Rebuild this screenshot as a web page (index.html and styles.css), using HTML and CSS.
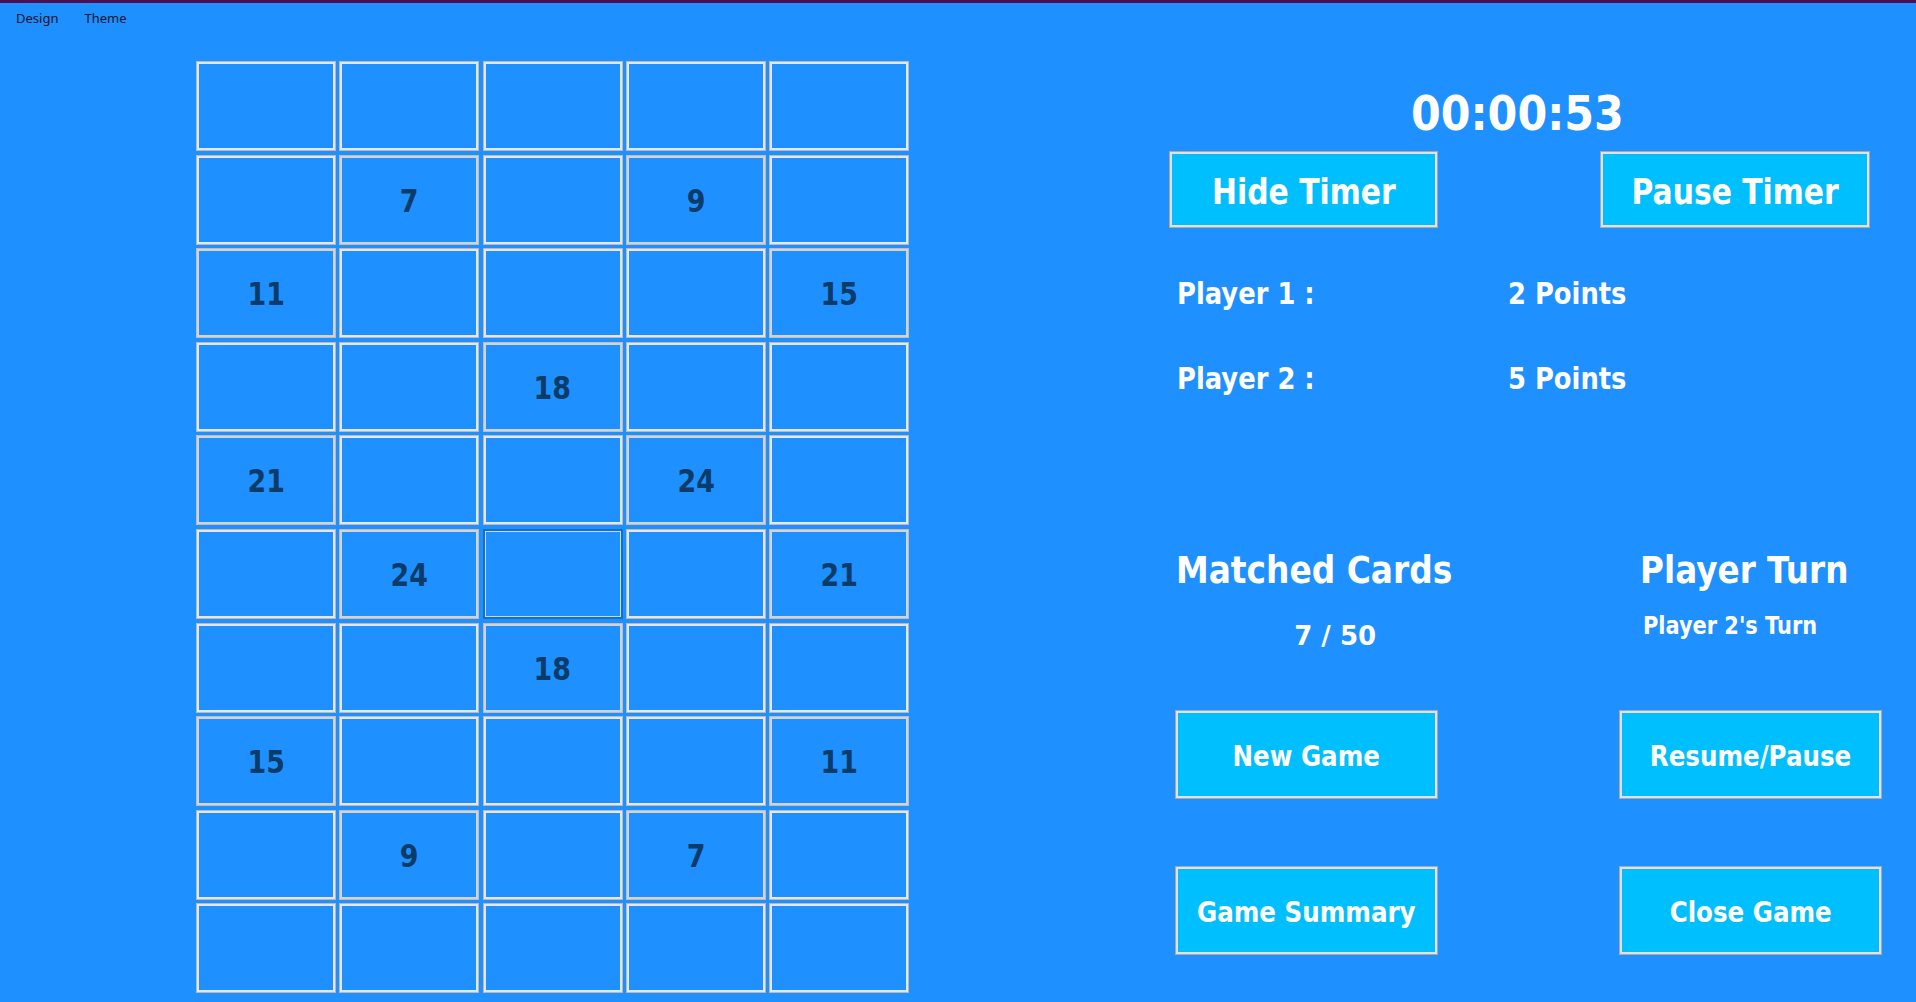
FILE: index.html
```html
<!DOCTYPE html>
<html lang="en">
<head>
<meta charset="utf-8">
<title>Memory Game</title>
<link rel="stylesheet" href="styles.css">
</head>
<body>
<div class="window">
  <nav class="menubar">
    <span class="menu-item">Design</span>
    <span class="menu-item">Theme</span>
  </nav>
  <main class="main">
    <section class="board">
      <div class="cell"></div><div class="cell"></div><div class="cell"></div><div class="cell"></div><div class="cell"></div>
      <div class="cell"></div><div class="cell open"><span>7</span></div><div class="cell"></div><div class="cell open"><span>9</span></div><div class="cell"></div>
      <div class="cell open"><span>11</span></div><div class="cell"></div><div class="cell"></div><div class="cell"></div><div class="cell open"><span>15</span></div>
      <div class="cell"></div><div class="cell"></div><div class="cell open"><span>18</span></div><div class="cell"></div><div class="cell"></div>
      <div class="cell open"><span>21</span></div><div class="cell"></div><div class="cell"></div><div class="cell open"><span>24</span></div><div class="cell"></div>
      <div class="cell"></div><div class="cell open"><span>24</span></div><div class="cell focus"></div><div class="cell"></div><div class="cell open"><span>21</span></div>
      <div class="cell"></div><div class="cell"></div><div class="cell open"><span>18</span></div><div class="cell"></div><div class="cell"></div>
      <div class="cell open"><span>15</span></div><div class="cell"></div><div class="cell"></div><div class="cell"></div><div class="cell open"><span>11</span></div>
      <div class="cell"></div><div class="cell open"><span>9</span></div><div class="cell"></div><div class="cell open"><span>7</span></div><div class="cell"></div>
      <div class="cell"></div><div class="cell"></div><div class="cell"></div><div class="cell"></div><div class="cell"></div>
    </section>
    <aside class="side">
      <div class="timer"><span>00:00:53</span></div>
      <div class="timer-actions">
        <button class="btn btn-timer"><span>Hide Timer</span></button>
        <button class="btn btn-timer btn-timer-r"><span>Pause Timer</span></button>
      </div>
      <div class="scores">
        <div class="score"><span class="score-name"><span>Player 1 :</span></span><span class="score-pts"><span>2 Points</span></span></div>
        <div class="score"><span class="score-name"><span>Player 2 :</span></span><span class="score-pts"><span>5 Points</span></span></div>
      </div>
      <div class="heads">
        <div class="head-left"><span>Matched Cards</span></div>
        <div class="head-right"><span>Player Turn</span></div>
      </div>
      <div class="sub">
        <div class="sub-left"><span>7 / 50</span></div>
        <div class="sub-right"><span>Player 2's Turn</span></div>
      </div>
      <div class="actions">
        <button class="btn btn-action"><span>New Game</span></button>
        <button class="btn btn-action"><span>Resume/Pause</span></button>
        <button class="btn btn-action"><span>Game Summary</span></button>
        <button class="btn btn-action"><span>Close Game</span></button>
      </div>
    </aside>
  </main>
</div>
</body>
</html>
```

FILE: styles.css
```css
html, body {
  margin: 0;
  padding: 0;
}
body {
  background: #1e90ff;
  font-family: "DejaVu Sans", Verdana, sans-serif;
  height: 1002px;
  overflow: hidden;
}
.window {
  border-top: 3px solid #4b0f52;
}
.menubar {
  height: 24px;
  box-sizing: border-box;
  padding: 7px 0 0 16px;
  display: flex;
  gap: 26px;
  font-family: "Noto Sans", "Open Sans", sans-serif;
  font-size: 13px;
  line-height: 16px;
  color: #14142a;
}
.main {
  display: flex;
  align-items: flex-start;
  padding-left: 196px;
}
.board {
  margin-top: 34px;
  display: grid;
  grid-template-columns: repeat(5, 140px);
  grid-template-rows: repeat(10, 90px);
  column-gap: 3.3px;
  row-gap: 3.6px;
  flex: none;
}
.cell {
  box-sizing: border-box;
  border: 1px solid #b9b9b9;
  box-shadow: inset 0 0 0 2px #e6e6e6;
  display: flex;
  align-items: center;
  justify-content: center;
  padding-top: 2px;
  font-weight: bold;
  font-size: 32px;
  color: #0b3b68;
  white-space: nowrap;
}
.cell.open {
  border-color: #bdbdbd;
  box-shadow: inset 0 0 0 2px #d3d3d3;
}
.cell span {
  display: inline-block;
  transform: scaleX(0.84);
}
.cell.focus {
  border: 2px solid #0a72cf;
  box-shadow: inset 0 0 0 1px #d6d6d6;
}
.side {
  margin-left: 260px;
  width: 713px;
  flex: none;
  padding-top: 62px;
  color: #ffffff;
  font-weight: bold;
  white-space: nowrap;
}
.timer {
  width: 696px;
  text-align: center;
  font-size: 48px;
  line-height: 48px;
}
.timer span {
  display: inline-block;
  transform: scaleX(0.892);
}
.timer-actions {
  margin-top: 14px;
  width: 701px;
  display: flex;
  justify-content: space-between;
}
.btn {
  box-sizing: border-box;
  background: #00bfff;
  border: 1px solid #a9a9a9;
  box-shadow: inset 0 0 0 2px #e1e1e1;
  color: #ffffff;
  font-family: inherit;
  font-weight: bold;
  display: flex;
  align-items: center;
  justify-content: center;
  padding: 0;
  margin: 0;
  white-space: nowrap;
}
.btn span {
  display: inline-block;
}
.btn-timer {
  width: 269px;
  height: 77px;
  padding-top: 4px;
  font-size: 36px;
  line-height: 40px;
}
.btn-timer-r {
  width: 270px;
}
.btn-timer span {
  transform: scaleX(0.828);
}
.scores {
  padding-top: 1px;
}
.score {
  display: flex;
  padding-left: 8px;
  margin-top: 45px;
  font-size: 30px;
  line-height: 40px;
}
.score-name {
  width: 331px;
}
.score span span {
  display: inline-block;
  transform: scaleX(0.86);
  transform-origin: left center;
}
.heads {
  margin-top: 150px;
  display: flex;
  padding-left: 7px;
  font-size: 36.5px;
  line-height: 44px;
}
.head-left {
  width: 464px;
}
.heads span {
  display: inline-block;
  transform: scaleX(0.9);
  transform-origin: left center;
}
.heads .head-right span {
  transform: scaleX(0.895);
}
.sub {
  margin-top: 16px;
  display: flex;
  align-items: flex-start;
  line-height: 32px;
}
.sub-left {
  box-sizing: border-box;
  width: 474px;
  padding-left: 125px;
  margin-top: 11px;
  font-size: 26px;
}
.sub-left span {
  display: inline-block;
}
.sub-right {
  font-size: 25.5px;
}
.sub-right span {
  display: inline-block;
  transform: scaleX(0.82);
  transform-origin: left center;
}
.actions {
  margin-top: 58px;
  padding-left: 6px;
  display: grid;
  grid-template-columns: 263px 263px;
  column-gap: 181px;
  row-gap: 67px;
}
.btn-action {
  height: 89px;
  padding-top: 5px;
  font-size: 28.4px;
  line-height: 34px;
}
.btn-action span {
  transform: scaleX(0.865);
}
```
